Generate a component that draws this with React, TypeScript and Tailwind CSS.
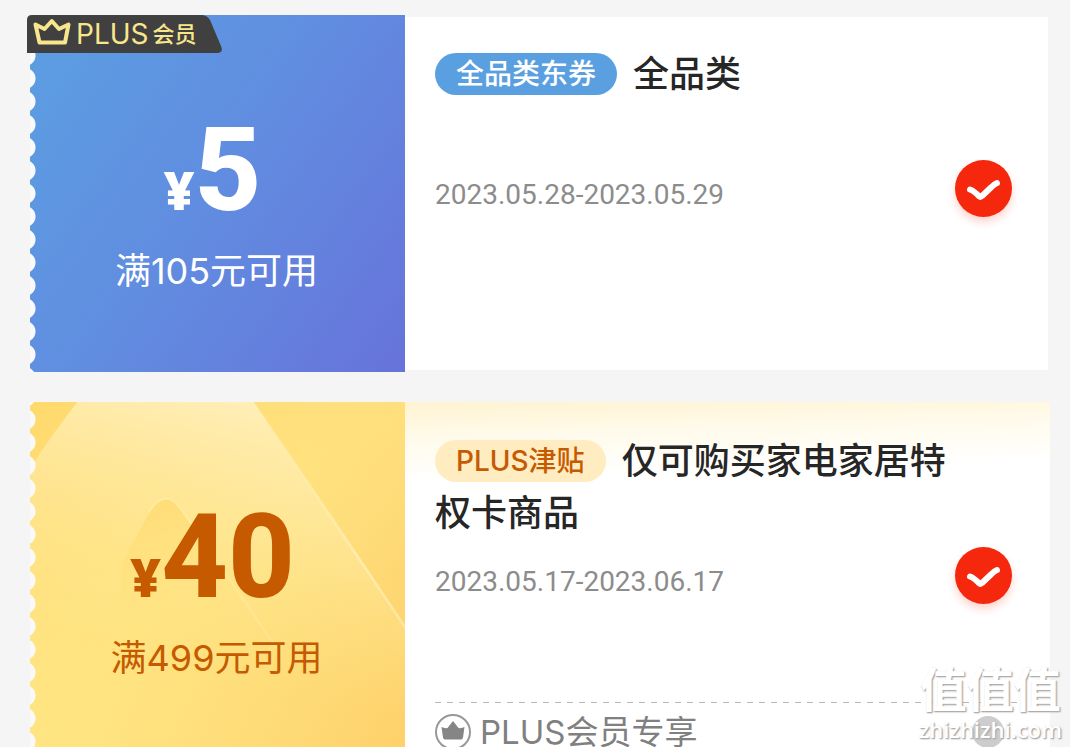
import React, { useState } from "react";
import clsx from "clsx";

type Tone = "blue" | "gold";

interface Coupon {
  id: string;
  tone: Tone;
  amount: string;
  condition: string;
  tag: string;
  title: string;
  period: string;
  ribbon?: boolean;
  note?: string;
}

const coupons: Coupon[] = [
  {
    id: "all",
    tone: "blue",
    amount: "5",
    condition: "满105元可用",
    tag: "全品类东券",
    title: "全品类",
    period: "2023.05.28-2023.05.29",
    ribbon: true,
  },
  {
    id: "plus",
    tone: "gold",
    amount: "40",
    condition: "满499元可用",
    tag: "PLUS津贴",
    title: "仅可购买家电家居特权卡商品",
    period: "2023.05.17-2023.06.17",
    note: "PLUS会员专享",
  },
];

function MemberRibbon() {
  return (
    <div className="absolute top-0 -left-[3px] z-10 flex h-[38px] w-[195px] items-center pl-[6px] text-[#f8e68c]">
      <svg className="absolute inset-0 h-full w-full" viewBox="0 0 195 38" aria-hidden="true">
        <path d="M0 5Q0 0 5 0H174Q180 0 183 5L194 31Q197 38 190 38H0Z" fill="#404040" />
      </svg>
      <svg className="relative mt-[2px] h-7 w-[38px] self-start" viewBox="0 0 38 28" fill="none" aria-hidden="true">
        <path
          d="M2.500 7.500L11.500 12L18.800 4L26 12L35.500 7.500L32 25.500H6.500Z"
          stroke="currentColor"
          strokeWidth="4"
          strokeLinejoin="round"
        />
      </svg>
      <span className="relative ml-[5px] flex items-center gap-1">
        <span className="text-[28px] leading-8">PLUS</span>
        <span className="text-[22px] leading-8 font-medium">会员</span>
      </span>
    </div>
  );
}

function GoldArtwork() {
  return (
    <svg
      className="absolute inset-0 h-full w-full"
      viewBox="0 0 375 357"
      preserveAspectRatio="xMidYMin slice"
      aria-hidden="true"
    >
      <defs>
        <linearGradient id="peak" x1="0.55" y1="0" x2="0.4" y2="0.75">
          <stop offset="0" stopColor="#fff0bd" stopOpacity="0.9" />
          <stop offset="0.45" stopColor="#ffe99f" stopOpacity="0.6" />
          <stop offset="1" stopColor="#ffe684" stopOpacity="0" />
        </linearGradient>
        <linearGradient id="hill" x1="0" y1="0" x2="0.2" y2="1">
          <stop offset="0" stopColor="#ffdb70" stopOpacity="0.9" />
          <stop offset="0.8" stopColor="#ffe07a" stopOpacity="0" />
        </linearGradient>
        <linearGradient id="edge" x1="0" y1="0" x2="0" y2="1">
          <stop offset="0" stopColor="#fff2c4" stopOpacity="0.1" />
          <stop offset="0.7" stopColor="#fff0b8" stopOpacity="0.8" />
          <stop offset="1" stopColor="#ffedb0" stopOpacity="0.6" />
        </linearGradient>
        <linearGradient id="ridge" x1="0" y1="0" x2="1" y2="1">
          <stop offset="0" stopColor="#fff0b4" stopOpacity="0.6" />
          <stop offset="1" stopColor="#ffeeae" stopOpacity="0.3" />
        </linearGradient>
      </defs>
      <path d="M0 72Q14 47 50 0H223L375 226V357H0Z" fill="url(#peak)" />
      <path d="M223 0L375 226" stroke="url(#edge)" strokeWidth="2.5" />
      <path d="M94 158L122 106Q136 86 150 103L250 248H94Z" fill="url(#hill)" />
      <path d="M120 108Q136 84 151 104L250 248" fill="none" stroke="url(#ridge)" strokeWidth="2" />
    </svg>
  );
}

function CrownBadge() {
  return (
    <svg className="h-9 w-9 shrink-0" viewBox="0 0 36 36" fill="none" aria-hidden="true">
      <circle cx="18" cy="18" r="17" stroke="#999" strokeWidth="2" />
      <path
        d="M6.500 13Q9.500 14.500 12.500 14L18 7L23.500 14Q26.500 14.500 29.500 13L28 23.500Q27.700 25.500 26 25.500H10Q8.300 25.500 8 23.500Z"
        fill="#858585"
      />
    </svg>
  );
}

function CouponCard({ coupon }: { coupon: Coupon }) {
  const [checked, setChecked] = useState(true);
  const gold = coupon.tone === "gold";
  return (
    <article className="relative flex min-h-[357px]">
      {coupon.ribbon && <MemberRibbon />}
      <div
        className={clsx(
          "relative w-[375px] shrink-0",
          gold
            ? "bg-[linear-gradient(115deg,#ffe985_0%,#ffe481_40%,#fedc78_70%,#fed06b_100%)] text-[#c55a00]"
            : "bg-[linear-gradient(125deg,#5b9fe2_0%,#618ce0_50%,#6773da_100%)] text-white",
        )}
      >
        {gold && (
          <div className="absolute inset-0 bg-[linear-gradient(150deg,#ffd96c_0%,#ffdf7a_25%,#ffe17f99_40%,#ffe68000_65%)]" />
        )}
        {gold && <GoldArtwork />}
        <div className="absolute inset-y-0 left-0 w-[7px] bg-[radial-gradient(circle_at_-5px_50%,#f9f9fa_10px,transparent_11px)] bg-[length:7px_23px] bg-[position:0_6px] bg-repeat-y" />
        <div className="relative flex flex-col items-center pt-[95px] pr-[2px]">
          <p className="flex items-baseline font-bold">
            <span className="font-['Open_Sans','Liberation_Sans',sans-serif] text-[53px] leading-none font-extrabold">¥</span>
            <span className="mr-2 font-['Roboto',sans-serif] text-[116px] leading-[120px] font-extrabold">
              {coupon.amount}
            </span>
          </p>
          <p className="mt-[17px] text-[36px] leading-[48px]">{coupon.condition}</p>
        </div>
      </div>
      <div
        className={clsx(
          "min-w-0 flex-1 border-y-2 border-r-2 border-transparent",
          gold
            ? "bg-white bg-[linear-gradient(178deg,#fff3d0_0px,#fffaea_36px,#ffffff_80px)] bg-clip-border bg-origin-border"
            : "bg-white bg-clip-padding",
        )}
      >
        <div className="flex items-start pt-[31px] pr-9 pl-[30px]">
          <div className="min-w-0 flex-1">
            <h2 className="min-h-[104px] text-[36px] leading-[52px] font-medium text-[#262626]">
              <span
                className={clsx(
                  "mr-4 inline-block rounded-full px-[21px] align-[3px] text-[28px] leading-[42px]",
                  gold ? "bg-[#ffecc0] text-[#c55a00]" : "bg-[#5a9fe0] text-white",
                )}
              >
                {coupon.tag}
              </span>
              {coupon.title}
            </h2>
            <p className="mt-[27px] font-['Roboto','Noto_Sans_CJK_SC',sans-serif] text-[28px] leading-8 text-[#8c8c8c]">
              {coupon.period}
            </p>
          </div>
          <label className="mt-28 grid shrink-0 cursor-pointer place-items-center">
            <input
              type="checkbox"
              aria-label={coupon.title}
              checked={checked}
              onChange={() => setChecked(!checked)}
              className="col-start-1 row-start-1 h-[57px] w-[57px] appearance-none rounded-full border-2 border-gray-300 bg-white checked:border-0 checked:bg-[#f5270c] checked:shadow-[0_5px_9px_rgba(245,39,12,0.2)]"
            />
            <svg
              className="pointer-events-none col-start-1 row-start-1 h-[57px] w-[57px]"
              viewBox="0 0 57 57"
              fill="none"
              aria-hidden="true"
            >
              <path
                d="M15 29.500Q19 31 24 36.200Q25.500 37.500 27 36L36.500 27Q39.500 24 42 23"
                stroke="white"
                strokeWidth="6"
                strokeLinecap="round"
                strokeLinejoin="round"
              />
            </svg>
          </label>
        </div>
        {coupon.note && (
          <div className="mt-[98px] pr-[30px] pb-3 pl-[30px]">
            <svg className="block h-px w-full" aria-hidden="true">
              <line x1="0" y1="0.5" x2="100%" y2="0.5" stroke="#b8b8b8" strokeWidth="1" strokeDasharray="6 6" />
            </svg>
            <div className="mt-[9px] flex items-center">
              <CrownBadge />
              <span className="ml-[9px] text-[33px] leading-10 text-[#808080]">{coupon.note}</span>
              <button
                type="button"
                aria-label="展开"
                className="mr-[14px] ml-auto h-8 w-8 rounded-full bg-[#cdcdcd]"
              />
            </div>
          </div>
        )}
      </div>
    </article>
  );
}

export default function App() {
  return (
    <div className="relative h-screen overflow-hidden bg-[#f5f5f5] font-['Inter','Noto_Sans_CJK_SC',sans-serif]">
      <main className="flex flex-col gap-[30px] pt-[15px] pr-5 pl-[30px]">
        {coupons.map((coupon) => (
          <CouponCard key={coupon.id} coupon={coupon} />
        ))}
      </main>
      <div className="pointer-events-none absolute right-2 bottom-1 flex flex-col items-center text-white [text-shadow:1px_1px_2px_#aaa,1px_1px_1px_#b4b4b4]">
        <span className="text-[47px] leading-[50px] font-bold">值值值</span>
        <span className="font-['Open_Sans',sans-serif] text-[22px] leading-[28px] font-semibold">zhizhizhi.com</span>
      </div>
    </div>
  );
}
